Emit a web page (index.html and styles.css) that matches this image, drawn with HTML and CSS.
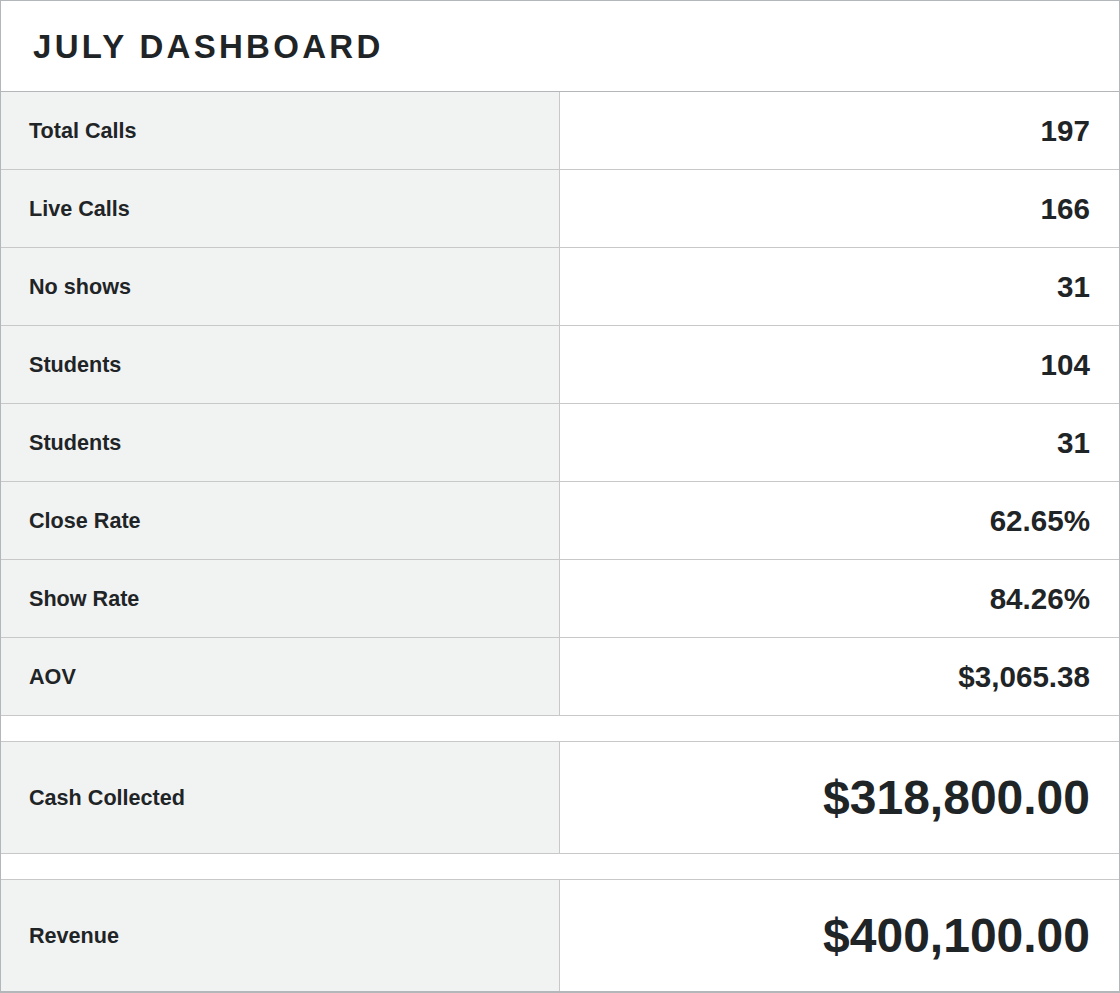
FILE: index.html
```html
<!DOCTYPE html>
<html>
<head>
<meta charset="utf-8">
<link rel="stylesheet" href="styles.css">
</head>
<body>
<div class="board">
  <div class="header"><h1 class="title">JULY DASHBOARD</h1></div>
  <div class="row"><div class="label">Total Calls</div><div class="value">197</div></div>
  <div class="row"><div class="label">Live Calls</div><div class="value">166</div></div>
  <div class="row"><div class="label">No shows</div><div class="value">31</div></div>
  <div class="row"><div class="label">Students</div><div class="value">104</div></div>
  <div class="row"><div class="label">Students</div><div class="value">31</div></div>
  <div class="row"><div class="label">Close Rate</div><div class="value">62.65%</div></div>
  <div class="row"><div class="label">Show Rate</div><div class="value">84.26%</div></div>
  <div class="row"><div class="label">AOV</div><div class="value">$3,065.38</div></div>
  <div class="spacer"></div>
  <div class="row big"><div class="label">Cash Collected</div><div class="value">$318,800.00</div></div>
  <div class="spacer"></div>
  <div class="row big last"><div class="label">Revenue</div><div class="value">$400,100.00</div></div>
</div>
</body>
</html>
```
FILE: styles.css
```css
html, body {
  margin: 0;
  padding: 0;
  background: #ffffff;
}
body {
  font-family: "Liberation Sans", Arial, sans-serif;
  color: #1f2427;
}
.board {
  width: 1120px;
  box-sizing: border-box;
  border: 1px solid #b3b7b9;
  border-bottom-width: 2px;
}
.header {
  height: 90px;
  border-bottom: 1px solid #b3b7b9;
  display: flex;
  align-items: center;
  padding-left: 32px;
}
.title {
  margin: 0;
  font-size: 33px;
  font-weight: bold;
  letter-spacing: 3.3px;
  line-height: 1;
}
.row {
  display: grid;
  grid-template-columns: 559px 1fr;
  height: 78px;
  box-sizing: border-box;
  border-bottom: 1px solid #c8c8c8;
}
.row.big {
  height: 112px;
}
.row.last {
  border-bottom: none;
  height: 111px;
}
.label {
  background: #f1f3f2;
  border-right: 1px solid #c8c8c8;
  display: flex;
  align-items: center;
  padding-left: 28px;
  font-size: 21.6px;
  font-weight: bold;
}
.value {
  display: flex;
  align-items: center;
  justify-content: flex-end;
  padding-right: 29px;
  font-size: 29.6px;
  font-weight: bold;
}
.big .value {
  font-size: 48px;
}
.spacer {
  height: 26px;
  box-sizing: border-box;
  border-bottom: 1px solid #c8c8c8;
}
```
